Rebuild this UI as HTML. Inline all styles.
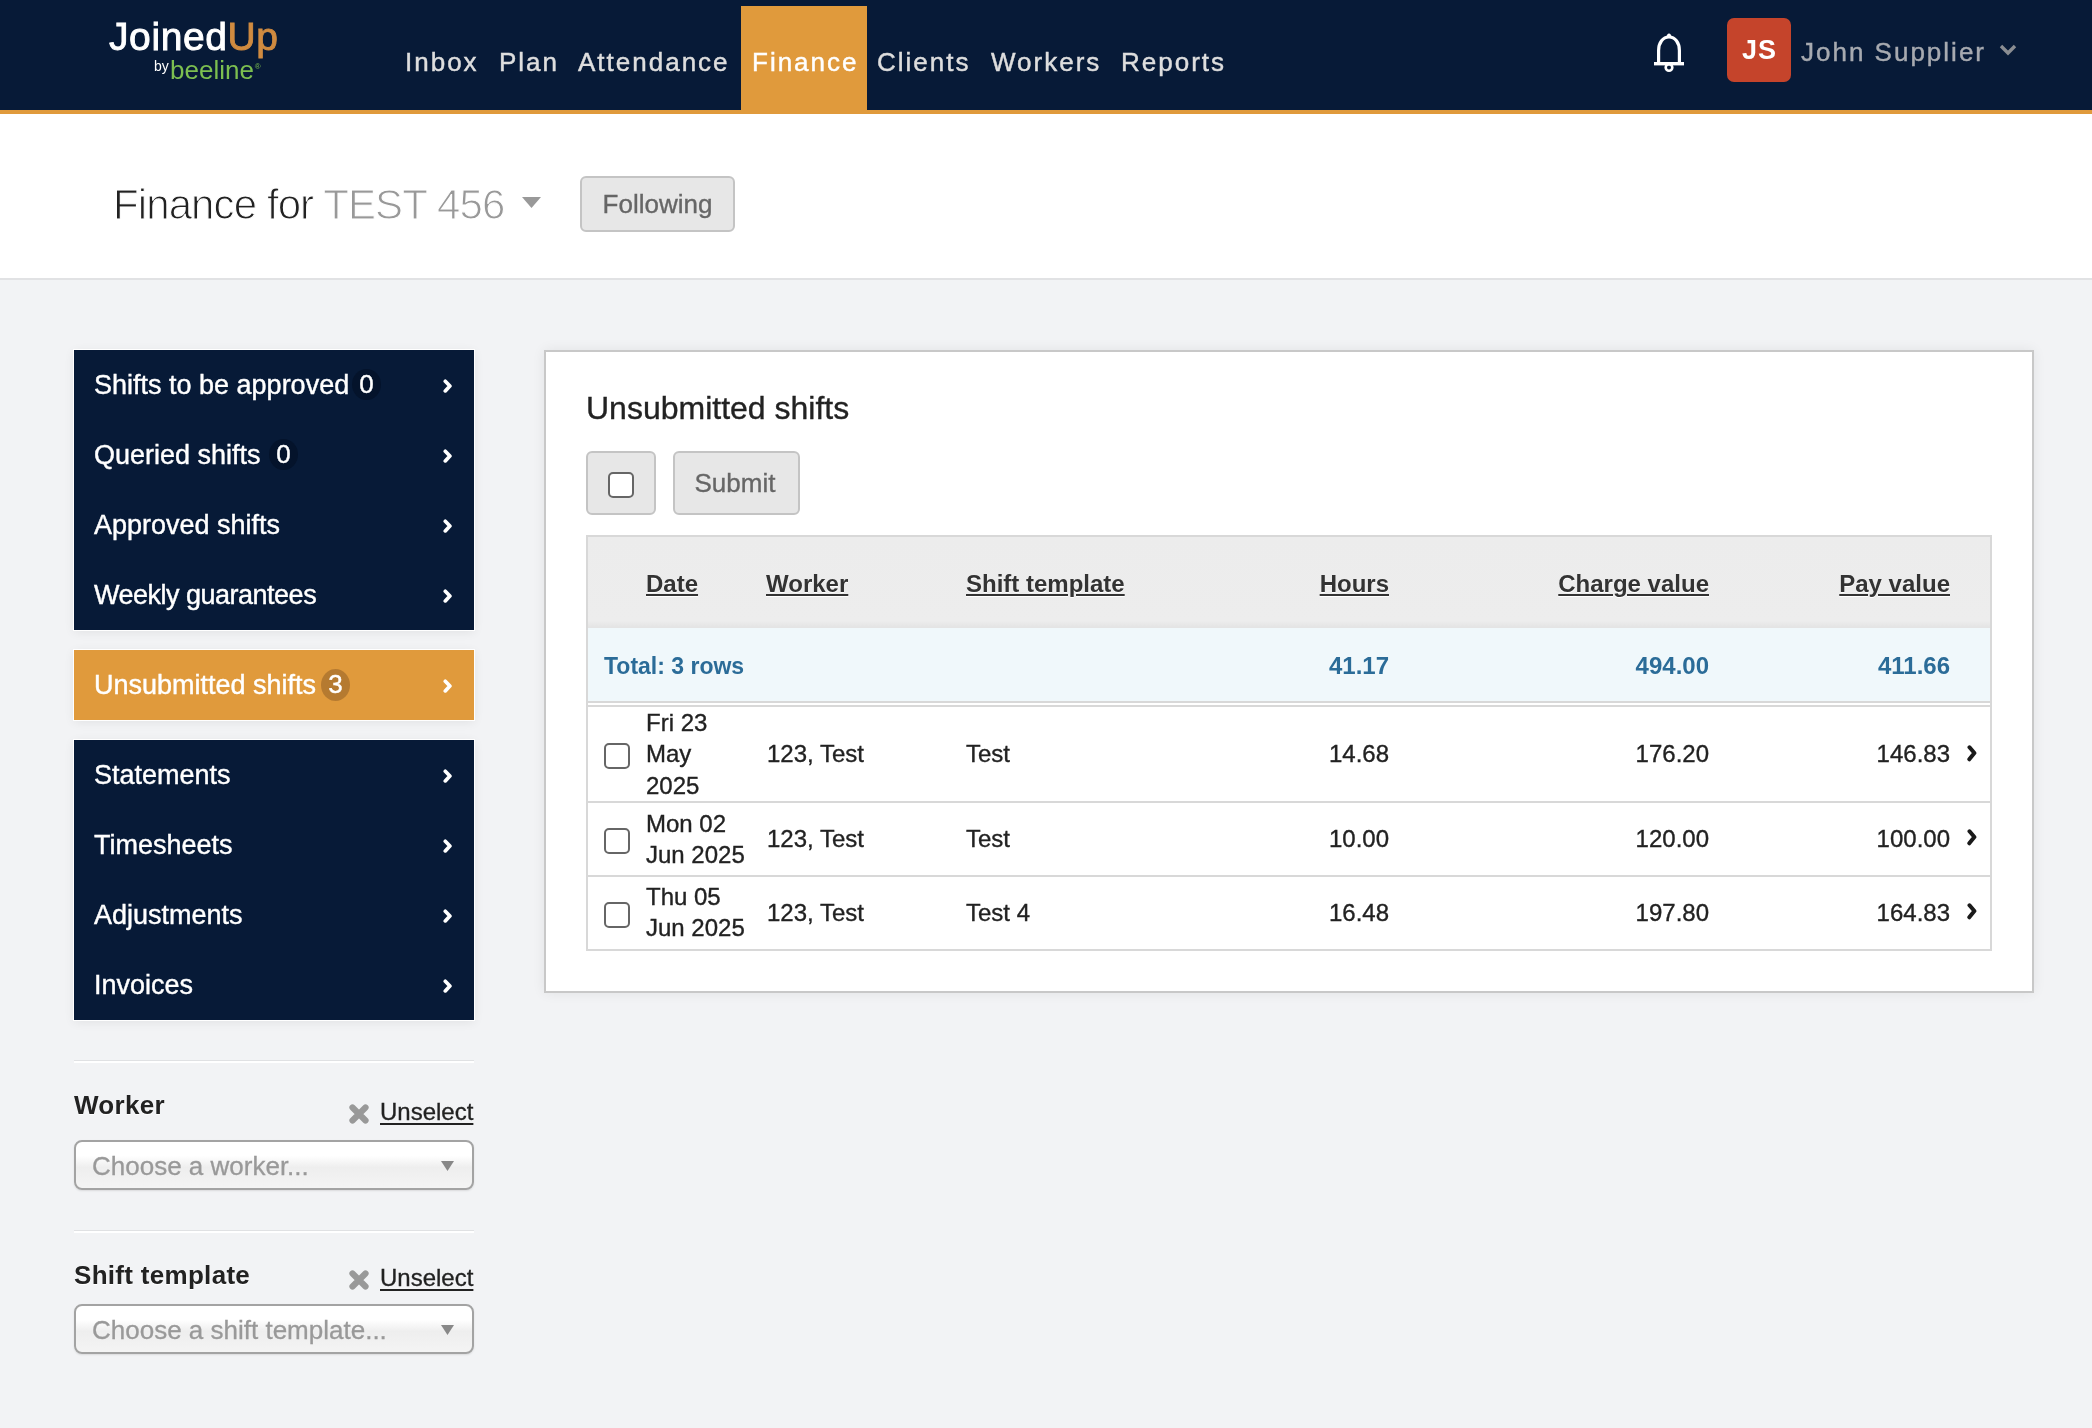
<!DOCTYPE html>
<html><head><meta charset="utf-8">
<style>
*{margin:0;padding:0;box-sizing:border-box}
html,body{width:2092px;height:1428px;overflow:hidden}
body{will-change:transform}
body{position:relative;background:#f2f3f5;font-family:"Liberation Sans",sans-serif;color:#222}
.abs{position:absolute}
/* navbar */
#nav{position:absolute;left:0;top:0;width:2092px;height:110px;background:#071a37}
#navline{position:absolute;left:0;top:110px;width:2092px;height:4px;background:#e09a3c}
.ni{position:absolute;top:0;height:110px;font-size:26px;letter-spacing:2px;color:#dedede;-webkit-text-stroke:0.45px #dedede;line-height:110px;padding-top:14px;line-height:96px}
.ni.act{background:#e09a3c;color:#fff;-webkit-text-stroke:0.45px #fff;top:6px;height:104px;padding-top:8px;line-height:96px}
/* header */
#hdr{position:absolute;left:0;top:114px;width:2092px;height:164px;background:#fff}
#hdrline{position:absolute;left:0;top:278px;width:2092px;height:2px;background:#e1e2e4}
/* sidebar */
.sbox{position:absolute;left:74px;width:400px;background:#071a37;box-shadow:0 0 0 1px #fff,0 2px 10px rgba(0,0,0,.08)}
.si{position:relative;height:70px;color:#fff;font-size:27px;line-height:70px;padding-left:20px;-webkit-text-stroke:0.4px #fff}
.chev{position:absolute;left:365px;top:28px;width:16px;height:16px;overflow:visible;filter:blur(0.5px)}
.bdg{position:absolute;top:19px;width:29px;height:31px;border-radius:50%;background:#04132b;text-align:center;line-height:31px;font-size:26px}
.badge{display:inline-block;width:30px;height:30px;border-radius:15px;background:#04132b;text-align:center;line-height:30px;vertical-align:2px;font-size:26px}
/* panel */
#panel{position:absolute;left:544px;top:350px;width:1490px;height:643px;background:#fff;border:2px solid #c8c8c8;box-shadow:0 0 12px rgba(0,0,0,.07)}

.flab{font-size:26px;font-weight:bold;color:#222;line-height:34px;letter-spacing:0.3px;text-shadow:0 1px 0 #fff}
.unsel{font-size:24px;color:#222;-webkit-text-stroke:0.3px #222;line-height:32px;text-decoration:underline;text-decoration-thickness:2px;text-underline-offset:3px}
.sel{width:400px;height:50px;border:2px solid #a3a3a3;border-radius:8px;background:linear-gradient(#fff 0%,#fff 30%,#eee 55%,#f4f4f4 100%);color:#999;font-size:26px;line-height:48px;padding-left:16px;-webkit-text-stroke:0.3px #999;box-shadow:0 1px 2px rgba(0,0,0,.1)}

.btn{border:2px solid #c4c4c4;border-radius:6px;background:#e7e7e7}
.cb{position:absolute;width:26px;height:26px;border:2px solid #666;border-radius:5px;background:#fff}
.thead{background:linear-gradient(#ececec 0%,#ededed 92%,#e3e3e3 100%)}
.th{top:568px;font-size:24px;font-weight:bold;color:#333;line-height:32px;text-decoration:underline;text-decoration-thickness:2px;text-underline-offset:2px;text-shadow:0 1px 0 #fff}
.tot{top:650px;font-size:24px;font-weight:bold;color:#2b6c98;line-height:32px}
.td{font-size:24px;color:#222;line-height:31.4px;-webkit-text-stroke:0.35px #222}
.rchev{width:12px;height:16px;display:block;overflow:visible;filter:blur(0.6px)}
</style></head>
<body>
<div id="nav">
  <!-- logo -->
  <div class="abs" style="left:109px;top:15px;font-size:39px;letter-spacing:0.6px;color:#fff;line-height:44px;-webkit-text-stroke:0.9px #fff">Joined<span style="color:#d08b40;-webkit-text-stroke:0.9px #d08b40">Up</span></div>
  <div class="abs" style="left:154px;top:57px;font-size:14px;color:#fff;line-height:18px">by</div>
  <div class="abs" style="left:170px;top:51px;font-size:26px;color:#7cbf50;line-height:32px;letter-spacing:0px">beeline<span style="font-size:8px;vertical-align:10px;margin-left:1px">®</span></div>

  <div class="ni" style="left:395px;padding-left:10px;padding-right:8px">Inbox</div>
  <div class="ni" style="left:489px;padding-left:10px;padding-right:8px">Plan</div>
  <div class="ni" style="left:568px;padding-left:10px;padding-right:8px">Attendance</div>
  <div class="ni act" style="left:741px;width:126px;padding-left:11px">Finance</div>
  <div class="ni" style="left:867px;padding-left:10px;padding-right:8px">Clients</div>
  <div class="ni" style="left:981px;padding-left:10px;padding-right:8px">Workers</div>
  <div class="ni" style="left:1111px;padding-left:10px;padding-right:8px">Reports</div>

  <!-- bell -->
  <svg class="abs" style="left:1650px;top:30px" width="38" height="44" viewBox="0 0 38 44">
    <path d="M8.6 33 V20.5 C8.6 12.5 13 7 19 7 C25 7 29.4 12.5 29.4 20.5 V33" fill="none" stroke="#fff" stroke-width="3.2"/>
    <rect x="4" y="32" width="30" height="3.4" fill="#fff"/>
    <circle cx="19" cy="37.5" r="3.3" fill="none" stroke="#fff" stroke-width="2.6"/>
    <path d="M16.3 7.5 Q17 3.8 19 3.6 Q21 3.8 21.7 7.5 Z" fill="#fff"/>
  </svg>
  <div class="abs" style="left:1727px;top:18px;width:64px;height:64px;border-radius:7px;background:#c5442b;color:#fff;font-weight:bold;font-size:27px;letter-spacing:1px;text-align:center;line-height:64px;padding-left:1px">JS</div>
  <div class="abs" style="left:1801px;top:30px;font-size:26px;letter-spacing:2px;color:#a7aab0;line-height:44px;-webkit-text-stroke:0.4px #a7aab0">John Supplier</div>
  <svg class="abs" style="left:1999px;top:44px" width="18" height="12" viewBox="0 0 18 12">
    <path d="M2 2 L9 9 L16 2" fill="none" stroke="#8a8d92" stroke-width="3.4"/>
  </svg>
</div>
<div id="navline"></div>

<div id="hdr"></div>
<div id="hdrline"></div>


<!-- header content -->
<div class="abs" style="left:113px;top:179px;font-size:42px;line-height:52px;color:#222;letter-spacing:-0.9px;-webkit-text-stroke:1.1px #fff">Finance for <span style="color:#999">TEST 456</span></div>
<svg class="abs" style="left:522px;top:197px" width="19" height="12" viewBox="0 0 19 12"><path d="M0 0 H19 L9.5 11 Z" fill="#999"/></svg>
<div class="abs" style="left:580px;top:176px;width:155px;height:56px;border:2px solid #c4c4c4;border-radius:6px;background:#e7e7e7;color:#666;font-size:26px;line-height:52px;text-align:center;-webkit-text-stroke:0.35px #666">Following</div>

<!-- sidebar -->
<div class="sbox" style="top:350px;height:280px">
  <div class="si">Shifts to be approved<span class="bdg" style="left:278px">0</span><svg class="chev" viewBox="0 0 16 16"><path d="M6.3 3.3 L10.9 8 L6.3 12.9" fill="none" stroke="#fff" stroke-width="3.7" stroke-linecap="round" stroke-linejoin="round"/></svg></div>
  <div class="si">Queried shifts<span class="bdg" style="left:195px">0</span><svg class="chev" viewBox="0 0 16 16"><path d="M6.3 3.3 L10.9 8 L6.3 12.9" fill="none" stroke="#fff" stroke-width="3.7" stroke-linecap="round" stroke-linejoin="round"/></svg></div>
  <div class="si">Approved shifts<svg class="chev" viewBox="0 0 16 16"><path d="M6.3 3.3 L10.9 8 L6.3 12.9" fill="none" stroke="#fff" stroke-width="3.7" stroke-linecap="round" stroke-linejoin="round"/></svg></div>
  <div class="si"><span style="letter-spacing:-0.5px">Weekly guarantees</span><svg class="chev" viewBox="0 0 16 16"><path d="M6.3 3.3 L10.9 8 L6.3 12.9" fill="none" stroke="#fff" stroke-width="3.7" stroke-linecap="round" stroke-linejoin="round"/></svg></div>
</div>
<div class="sbox" style="top:650px;height:70px;background:#e09a3c">
  <div class="si">Unsubmitted shifts<span class="bdg" style="left:247px;background:#b57a30;height:32px">3</span><svg class="chev" viewBox="0 0 16 16"><path d="M6.3 3.3 L10.9 8 L6.3 12.9" fill="none" stroke="#fff" stroke-width="3.7" stroke-linecap="round" stroke-linejoin="round"/></svg></div>
</div>
<div class="sbox" style="top:740px;height:280px">
  <div class="si">Statements<svg class="chev" viewBox="0 0 16 16"><path d="M6.3 3.3 L10.9 8 L6.3 12.9" fill="none" stroke="#fff" stroke-width="3.7" stroke-linecap="round" stroke-linejoin="round"/></svg></div>
  <div class="si">Timesheets<svg class="chev" viewBox="0 0 16 16"><path d="M6.3 3.3 L10.9 8 L6.3 12.9" fill="none" stroke="#fff" stroke-width="3.7" stroke-linecap="round" stroke-linejoin="round"/></svg></div>
  <div class="si">Adjustments<svg class="chev" viewBox="0 0 16 16"><path d="M6.3 3.3 L10.9 8 L6.3 12.9" fill="none" stroke="#fff" stroke-width="3.7" stroke-linecap="round" stroke-linejoin="round"/></svg></div>
  <div class="si">Invoices<svg class="chev" viewBox="0 0 16 16"><path d="M6.3 3.3 L10.9 8 L6.3 12.9" fill="none" stroke="#fff" stroke-width="3.7" stroke-linecap="round" stroke-linejoin="round"/></svg></div>
</div>

<!-- filters -->
<div class="abs" style="left:74px;top:1060px;width:400px;height:1px;background:#e0e1e3"></div>
<div class="abs" style="left:74px;top:1061px;width:400px;height:2px;background:#fff"></div>
<div class="abs flab" style="left:74px;top:1088px">Worker</div>
<svg class="abs" style="left:348px;top:1103px" width="22" height="22" viewBox="0 0 22 22"><path d="M4.5 4.5 L17.5 17.5 M17.5 4.5 L4.5 17.5" stroke="#999" stroke-width="6.2" stroke-linecap="round" style="filter:blur(0.4px)"/></svg>
<div class="abs unsel" style="left:380px;top:1096px">Unselect</div>
<div class="abs sel" style="left:74px;top:1140px">Choose a worker...<svg class="abs" style="left:365px;top:19px" width="13" height="11" viewBox="0 0 13 11"><path d="M0 0 H13 L6.5 10 Z" fill="#888"/></svg></div>

<div class="abs" style="left:74px;top:1230px;width:400px;height:1px;background:#e0e1e3"></div>
<div class="abs" style="left:74px;top:1231px;width:400px;height:2px;background:#fff"></div>
<div class="abs flab" style="left:74px;top:1258px">Shift template</div>
<svg class="abs" style="left:348px;top:1269px" width="22" height="22" viewBox="0 0 22 22"><path d="M4.5 4.5 L17.5 17.5 M17.5 4.5 L4.5 17.5" stroke="#999" stroke-width="6.2" stroke-linecap="round" style="filter:blur(0.4px)"/></svg>
<div class="abs unsel" style="left:380px;top:1262px">Unselect</div>
<div class="abs sel" style="left:74px;top:1304px">Choose a shift template...<svg class="abs" style="left:365px;top:19px" width="13" height="11" viewBox="0 0 13 11"><path d="M0 0 H13 L6.5 10 Z" fill="#888"/></svg></div>

<!-- panel -->
<div id="panel"></div>
<div class="abs" style="left:586px;top:388px;font-size:32px;line-height:40px;color:#222;-webkit-text-stroke:0.35px #222">Unsubmitted shifts</div>
<div class="abs btn" style="left:586px;top:451px;width:70px;height:64px"><div class="cb" style="left:20px;top:19px"></div></div>
<div class="abs btn" style="left:673px;top:451px;width:127px;height:64px;color:#666;font-size:26px;line-height:60px;text-align:center;padding-right:3px;-webkit-text-stroke:0.35px #666">Submit</div>

<div class="abs" style="left:586px;top:535px;width:1406px;height:416px;border:2px solid #d8d8d8;background:#fff"></div>
<div class="abs thead" style="left:588px;top:537px;width:1402px;height:91px"></div>
<div class="abs th" style="left:646px">Date</div>
<div class="abs th" style="left:766px">Worker</div>
<div class="abs th" style="left:966px">Shift template</div>
<div class="abs th r" style="right:703px">Hours</div>
<div class="abs th r" style="right:383px">Charge value</div>
<div class="abs th r" style="right:142px">Pay value</div>

<div class="abs" style="left:588px;top:628px;width:1402px;height:73px;background:#f0f8fb"></div>
<div class="abs tot" style="left:604px;font-size:23px">Total: 3 rows</div>
<div class="abs tot" style="right:703px">41.17</div>
<div class="abs tot" style="right:383px">494.00</div>
<div class="abs tot" style="right:142px">411.66</div>
<div class="abs" style="left:588px;top:701px;width:1402px;height:2px;background:#d8d8d8"></div>
<div class="abs" style="left:588px;top:705px;width:1402px;height:2px;background:#d8d8d8"></div>

<div class="abs" style="left:588px;top:801px;width:1402px;height:2px;background:#d8d8d8"></div>
<div class="abs" style="left:588px;top:875px;width:1402px;height:2px;background:#d8d8d8"></div>

<!-- row1 -->
<div class="abs cb" style="left:604px;top:743px"></div>
<div class="abs td" style="left:646px;top:707px">Fri 23<br>May<br>2025</div>
<div class="abs td" style="left:767px;top:738px">123, Test</div>
<div class="abs td" style="left:966px;top:738px">Test</div>
<div class="abs td" style="right:703px;top:738px">14.68</div>
<div class="abs td" style="right:383px;top:738px">176.20</div>
<div class="abs td" style="right:142px;top:738px">146.83</div>
<div class="abs" style="left:1966px;top:745px"><svg class="rchev" viewBox="0 0 12 16"><path d="M3.5 2.3 L8.4 8 L3.3 14.3" fill="none" stroke="#1a1a1a" stroke-width="4" stroke-linecap="round" stroke-linejoin="round"/></svg></div>
<!-- row2 -->
<div class="abs cb" style="left:604px;top:828px"></div>
<div class="abs td" style="left:646px;top:808px">Mon 02<br>Jun 2025</div>
<div class="abs td" style="left:767px;top:823px">123, Test</div>
<div class="abs td" style="left:966px;top:823px">Test</div>
<div class="abs td" style="right:703px;top:823px">10.00</div>
<div class="abs td" style="right:383px;top:823px">120.00</div>
<div class="abs td" style="right:142px;top:823px">100.00</div>
<div class="abs" style="left:1966px;top:829px"><svg class="rchev" viewBox="0 0 12 16"><path d="M3.5 2.3 L8.4 8 L3.3 14.3" fill="none" stroke="#1a1a1a" stroke-width="4" stroke-linecap="round" stroke-linejoin="round"/></svg></div>
<!-- row3 -->
<div class="abs cb" style="left:604px;top:902px"></div>
<div class="abs td" style="left:646px;top:881px">Thu 05<br>Jun 2025</div>
<div class="abs td" style="left:767px;top:897px">123, Test</div>
<div class="abs td" style="left:966px;top:897px">Test 4</div>
<div class="abs td" style="right:703px;top:897px">16.48</div>
<div class="abs td" style="right:383px;top:897px">197.80</div>
<div class="abs td" style="right:142px;top:897px">164.83</div>
<div class="abs" style="left:1966px;top:903px"><svg class="rchev" viewBox="0 0 12 16"><path d="M3.5 2.3 L8.4 8 L3.3 14.3" fill="none" stroke="#1a1a1a" stroke-width="4" stroke-linecap="round" stroke-linejoin="round"/></svg></div>
</body></html>
